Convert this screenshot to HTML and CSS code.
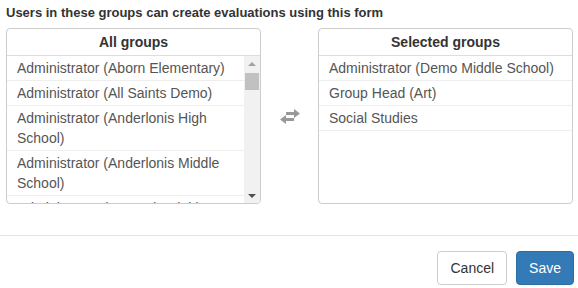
FILE: index.html
```html
<!DOCTYPE html>
<html>
<head>
  <title>Evaluation form groups</title>
  <link rel="stylesheet" href="styles.css">
</head>
<body>
  <div class="modal-body">
    <h4 class="title">Users in these groups can create evaluations using this form</h4>

    <div class="groups">
      <div class="panel">
        <div class="panel-heading">All groups</div>
        <div class="scroll-box">
          <ul class="list">
            <li>Administrator (Aborn Elementary)</li>
            <li>Administrator (All Saints Demo)</li>
            <li>Administrator (Anderlonis High School)</li>
            <li>Administrator (Anderlonis Middle School)</li>
            <li>Administrator (Kennedy High)</li>
            <li>Administrator (Lincoln Elementary)</li>
            <li>Administrator (Maple Grove)</li>
            <li>Administrator (North Ridge Middle)</li>
          </ul>
          <div class="scrollbar">
            <div class="sb-btn"><span class="arrow-up"></span></div>
            <div class="sb-track"><div class="sb-thumb"></div></div>
            <div class="sb-btn"><span class="arrow-down"></span></div>
          </div>
        </div>
      </div>

      <div class="transfer">
        <svg width="22" height="15" viewBox="0 0 22 15">
          <path d="M7 3h8V0l6 4.5-6 4.5V6H7z" fill="#999"/>
          <path d="M15 9H7V6L1 10.5 7 15v-3h8z" fill="#999"/>
        </svg>
      </div>

      <div class="panel">
        <div class="panel-heading">Selected groups</div>
        <ul class="list">
          <li>Administrator (Demo Middle School)</li>
          <li>Group Head (Art)</li>
          <li>Social Studies</li>
        </ul>
      </div>
    </div>
  </div>

  <div class="modal-footer">
    <button class="btn">Cancel</button>
    <button class="btn btn-primary">Save</button>
  </div>
</body>
</html>
```

FILE: styles.css
```css
body {
  margin: 0;
  font-family: "Liberation Sans", Arial, sans-serif;
  font-size: 14px;
  color: #333;
  background-color: white;
}
.modal-body {
  padding: 4px 5px 0 6px;
}
.title {
  margin: 0 0 6px 0;
  font-size: 13px;
  font-weight: bold;
  line-height: 18px;
}
.groups {
  display: flex;
  height: 176px;
}
.panel {
  width: 255px;
  display: flex;
  flex-direction: column;
  border: 1px solid #ccc;
  border-radius: 4px;
  box-sizing: border-box;
  overflow: hidden;
}
.panel-heading {
  height: 26px;
  line-height: 26px;
  text-align: center;
  font-weight: bold;
  font-size: 14px;
  color: #333;
  border-bottom: 1px solid #ddd;
}
.scroll-box {
  flex: 1;
  display: flex;
  min-height: 0;
}
.list {
  flex: 1;
  margin: 0;
  padding: 0;
  list-style: none;
  color: #555;
  overflow: hidden;
}
.list li {
  padding: 2px 10px;
  line-height: 20px;
  border-bottom: 1px solid #eee;
}
.scrollbar {
  width: 16px;
  display: flex;
  flex-direction: column;
  background-color: #f1f1f1;
}
.sb-btn {
  height: 15px;
  display: flex;
  align-items: center;
  justify-content: center;
}
.arrow-up {
  width: 0;
  height: 0;
  border-left: 4px solid transparent;
  border-right: 4px solid transparent;
  border-bottom: 4px solid #a3a3a3;
}
.arrow-down {
  width: 0;
  height: 0;
  border-left: 4px solid transparent;
  border-right: 4px solid transparent;
  border-top: 4px solid #505050;
}
.sb-track {
  flex: 1;
  padding: 2px 1px 0 1px;
}
.sb-thumb {
  height: 17px;
  background-color: #c1c1c1;
}
.transfer {
  flex: 1;
  display: flex;
  align-items: center;
  justify-content: center;
}
.modal-footer {
  margin-top: 31px;
  padding: 15px 4px 15px 15px;
  border-top: 1px solid #e5e5e5;
  display: flex;
  justify-content: flex-end;
  gap: 9px;
}
.btn {
  font-family: "Liberation Sans", Arial, sans-serif;
  font-size: 14px;
  line-height: 20px;
  padding: 6px 12px;
  height: 34px;
  border: 1px solid #ccc;
  border-radius: 4px;
  background-color: white;
  color: #333;
  cursor: pointer;
}
.btn-primary {
  background-color: #337ab7;
  border-color: #2e6da4;
  color: white;
}
.btn-primary:hover {
  background-color: #286090;
}
```
